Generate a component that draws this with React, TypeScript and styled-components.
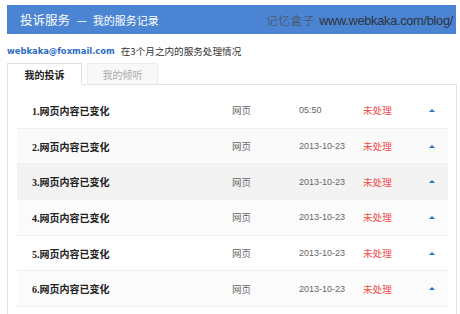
import React from "react";
import styled, { createGlobalStyle } from "styled-components";

const Global = createGlobalStyle`
  html, body { margin: 0; padding: 0; background: #fff; }
  body { font-family: "Liberation Sans", "Noto Sans CJK SC", sans-serif; color: #333; }
`;

const Page = styled.div`
  width: 450px;
  padding: 5px 0 0 7px;
`;

const Header = styled.div`
  height: 29px;
  width: 449px;
  box-sizing: border-box;
  background: #4a84d2;
  display: flex;
  align-items: center;
  justify-content: space-between;
  padding: 0 3px 0 13px;
`;

const HeadTitle = styled.div`
  display: flex;
  align-items: baseline;
  color: #fff;
  font-family: "Noto Sans CJK SC", sans-serif;
`;

const Main = styled.span`
  font-size: 12.5px;
`;

const Dash = styled.span`
  font-size: 11px;
  margin: 0 6px 0 7px;
`;

const Sub = styled.span`
  font-size: 11px;
`;

const Mark = styled.div`
  display: flex;
  align-items: baseline;
  gap: 4px;
`;

const MarkCn = styled.span`
  font-family: "Noto Sans CJK SC", serif;
  font-weight: 300;
  font-size: 11.5px;
  letter-spacing: 0.8px;
  color: #4b4b4b;
`;

const MarkUrl = styled.span`
  font-family: "Liberation Sans", sans-serif;
  font-size: 12.8px;
  letter-spacing: -0.3px;
  color: #2e3440;
`;

const Info = styled.div`
  margin-top: 11px;
  display: flex;
  align-items: center;
  gap: 6px;
  height: 12px;
  font-size: 10px;
`;

const Email = styled.span`
  font-family: "DejaVu Sans", sans-serif;
  font-weight: bold;
  font-size: 8.4px;
  color: #2e6cc5;
`;

const InfoText = styled.span`
  font-family: "Noto Sans CJK SC", sans-serif;
  font-size: 9.6px;
  color: #333;
`;

const Tabs = styled.div`
  margin-top: 6px;
  display: flex;
  gap: 5px;
  position: relative;
  z-index: 1;
  margin-bottom: -1px;
`;

const Tab = styled.div<{ $active?: boolean }>`
  box-sizing: border-box;
  height: 22px;
  width: ${(p) => (p.$active ? "75px" : "71px")};
  display: flex;
  align-items: center;
  justify-content: center;
  font-family: "Noto Sans CJK SC", sans-serif;
  font-size: 10px;
  font-weight: ${(p) => (p.$active ? 700 : 400)};
  color: ${(p) => (p.$active ? "#222" : "#aaa")};
  background: ${(p) => (p.$active ? "#fff" : "#f8f8f8")};
  border: 1px solid ${(p) => (p.$active ? "#e0e0e0" : "#ececec")};
  border-bottom: 1px solid ${(p) => (p.$active ? "#fff" : "#e3e3e3")};
`;

const Panel = styled.div`
  width: 450px;
  box-sizing: border-box;
  border: 1px solid #e3e3e3;
  padding: 8px 8px 10px 9px;
`;

const Row = styled.div<{ $bg: string }>`
  display: grid;
  grid-template-columns: 215px 67px 64px 66px 18px;
  align-items: center;
  height: 35.7px;
  box-sizing: border-box;
  background: ${(p) => p.$bg};
  border-bottom: 1px solid #f0f0f0;
`;

const Title = styled.div`
  padding-left: 15px;
  font-family: "Liberation Serif", "Noto Sans CJK SC", serif;
  font-weight: 700;
  font-size: 10px;
  color: #222;
`;

const Type = styled.div`
  font-family: "Noto Sans CJK SC", sans-serif;
  font-size: 9.5px;
  color: #666;
`;

const DateCell = styled.div`
  font-family: "Liberation Sans", sans-serif;
  font-size: 9px;
  color: #666;
`;

const Status = styled.div`
  font-family: "Noto Sans CJK SC", sans-serif;
  font-size: 9.6px;
  color: #f24b4b;
`;

const Arrow = styled.span`
  width: 0;
  height: 0;
  border-left: 3px solid transparent;
  border-right: 3px solid transparent;
  border-bottom: 3px solid #2d6cc8;
`;

const rows = [
  { n: 1, date: "05:50", bg: "#ffffff" },
  { n: 2, date: "2013-10-23", bg: "#fafafa" },
  { n: 3, date: "2013-10-23", bg: "#f3f3f3" },
  { n: 4, date: "2013-10-23", bg: "#fbfbfb" },
  { n: 5, date: "2013-10-23", bg: "#ffffff" },
  { n: 6, date: "2013-10-23", bg: "#fbfbfb" },
];

export default function App() {
  return (
    <Page>
      <Global />
      <Header>
        <HeadTitle>
          <Main>投诉服务</Main>
          <Dash>—</Dash>
          <Sub>我的服务记录</Sub>
        </HeadTitle>
        <Mark>
          <MarkCn>记忆盒子</MarkCn>
          <MarkUrl>www.webkaka.com/blog/</MarkUrl>
        </Mark>
      </Header>
      <Info>
        <Email>webkaka@foxmail.com</Email>
        <InfoText>在3个月之内的服务处理情况</InfoText>
      </Info>
      <Tabs>
        <Tab $active>我的投诉</Tab>
        <Tab>我的倾听</Tab>
      </Tabs>
      <Panel>
        {rows.map((r) => (
          <Row key={r.n} $bg={r.bg}>
            <Title>{r.n}.网页内容已变化</Title>
            <Type>网页</Type>
            <DateCell>{r.date}</DateCell>
            <Status>未处理</Status>
            <Arrow />
          </Row>
        ))}
      </Panel>
    </Page>
  );
}
